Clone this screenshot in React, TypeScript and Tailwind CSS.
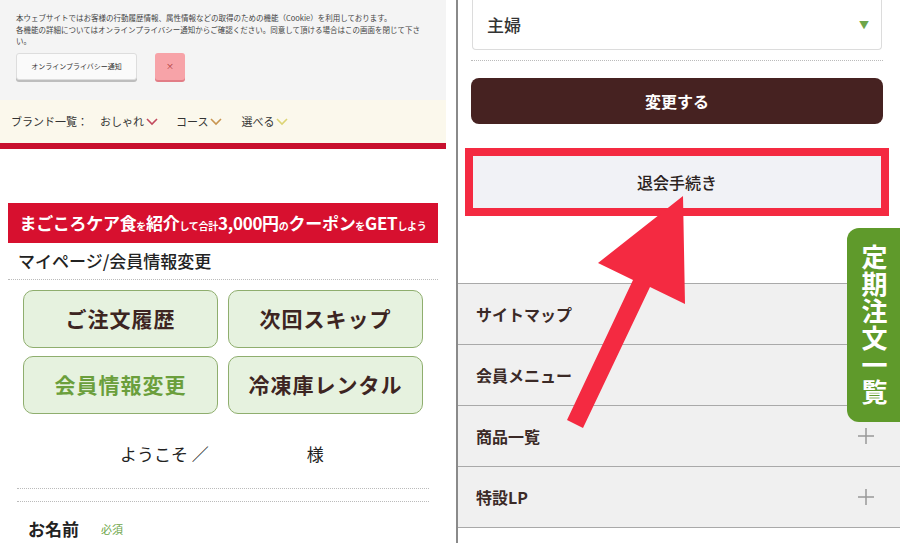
import React from "react";

const FONT = { fontFamily: '"Noto Sans CJK JP", "Noto Sans", sans-serif' };

function Chevron({ color }: { color: string }) {
  return (
    <svg width="12" height="8" viewBox="0 0 12 8" className="ml-[2px]">
      <polyline points="1,1 6,6 11,1" fill="none" stroke={color} strokeWidth="1.6" />
    </svg>
  );
}

function Plus() {
  return (
    <svg width="16" height="16" viewBox="0 0 16 16">
      <line x1="8" y1="0" x2="8" y2="16" stroke="#999" strokeWidth="1.5" />
      <line x1="0" y1="8" x2="16" y2="8" stroke="#999" strokeWidth="1.5" />
    </svg>
  );
}

export default function App() {
  const menuBtn =
    "flex items-center justify-center h-[58px] rounded-[10px] border border-[#8fae6e] bg-[#e6f2df] text-[21px] font-bold tracking-[1px]";
  return (
    <div style={FONT} className="w-[900px] h-[543px] overflow-hidden flex bg-white text-[#222]">
      {/* Left panel */}
      <div className="w-[446px] shrink-0 flex flex-col">
        {/* cookie */}
        <div className="h-[100px] shrink-0 bg-[#f4f4f4] pt-[12px] pl-[16px]">
          <div className="text-[7.5px] leading-[11.5px] text-[#444] whitespace-nowrap">
            <div>本ウェブサイトではお客様の行動履歴情報、属性情報などの取得のための機能（Cookie）を利用しております。</div>
            <div>各機能の詳細についてはオンラインプライバシー通知からご確認ください。同意して頂ける場合はこの画面を閉じて下さ</div>
            <div>い。</div>
          </div>
          <div className="flex gap-[18px] mt-[6px]">
            <div className="w-[121px] h-[27px] rounded-[3px] bg-[#fafafa] border border-[#ddd] shadow-[0_2px_0_#bdbdbd] flex items-center justify-center text-[7px] text-[#333]">
              オンラインプライバシー通知
            </div>
            <div className="w-[30px] h-[27px] rounded-[3px] bg-[#f7a3a8] shadow-[0_2px_0_#e27d86] flex items-center justify-center text-[8px] text-[#a33]">
              ×
            </div>
          </div>
        </div>
        {/* brand bar */}
        <div className="h-[43px] shrink-0 bg-[#fbf8ec] flex items-center pl-[11px] text-[11px] text-[#333]">
          <span>ブランド一覧：</span>
          <span className="ml-[12px] flex items-center">おしゃれ<Chevron color="#c24a5e" /></span>
          <span className="ml-[18px] flex items-center">コース<Chevron color="#c89550" /></span>
          <span className="ml-[19px] flex items-center">選べる<Chevron color="#dcd474" /></span>
        </div>
        <div className="h-[6px] shrink-0 bg-[#c8102e]" />
        {/* content */}
        <div className="shrink-0 pt-[54px] px-[8px]">
          <div className="h-[40px] bg-[#d7102f] flex items-center justify-center text-white font-bold whitespace-nowrap tracking-[-0.3px]">
            <span className="text-[17px]">まごころケア食</span>
            <span className="text-[10px] mt-[4px]">を</span>
            <span className="text-[17px]">紹介</span>
            <span className="text-[10px] mt-[4px]">して合計</span>
            <span className="text-[17px]">3,000円</span>
            <span className="text-[10px] mt-[4px]">の</span>
            <span className="text-[17px]">クーポン</span>
            <span className="text-[10px] mt-[4px]">を</span>
            <span className="text-[17px]">GET</span>
            <span className="text-[10px] mt-[4px]">しよう</span>
          </div>
          <div className="h-[36px] flex items-center pl-[10px] text-[17px] font-medium text-[#222]">
            マイページ/会員情報変更
          </div>
          <div className="border-t border-dotted border-[#bbb]" />
          <div className="grid grid-cols-2 gap-x-[10px] gap-y-[8px] px-[15px] mt-[10px]">
            <div className={menuBtn + " text-[#3d2522]"}>ご注文履歴</div>
            <div className={menuBtn + " text-[#3d2522]"}>次回スキップ</div>
            <div className={menuBtn + " text-[#6b9f3c]"}>会員情報変更</div>
            <div className={menuBtn + " text-[#3d2522]"}>冷凍庫レンタル</div>
          </div>
          <div className="h-[74px] pt-[6px] flex items-center text-[17px] text-[#222]">
            <span className="ml-[112px]">ようこそ ／</span>
            <span className="ml-[98px]">様</span>
          </div>
          <div className="mx-[9px] border-t border-dotted border-[#bbb]" />
          <div className="mx-[9px] mt-[12px] border-t border-dotted border-[#bbb]" />
          <div className="flex items-center h-[54px] pl-[20px]">
            <span className="text-[17px] font-bold text-[#222]">お名前</span>
            <span className="ml-[22px] text-[11px] text-[#6ea64a]">必須</span>
          </div>
        </div>
      </div>
      {/* separator */}
      <div className="w-[10px] shrink-0" />
      <div className="w-[2px] shrink-0 bg-[#8a8a8a]" />
      {/* Right panel */}
      <div className="relative flex-1 flex flex-col">
        <div className="shrink-0 ml-[14px] w-[410px] h-[50px] border border-t-0 border-[#dcdcdc] rounded-b-[4px] flex items-center justify-between pl-[14px] pr-[12px]">
          <span className="text-[17px] font-medium text-[#333]">主婦</span>
          <span className="text-[10px] text-[#6ea64a]">▼</span>
        </div>
        <div className="shrink-0 ml-[13px] w-[412px] mt-[10px] border-t border-dotted border-[#bbb]" />
        <div className="shrink-0 ml-[13px] w-[412px] h-[46px] mt-[17px] rounded-[8px] bg-[#462221] flex items-center justify-center text-white text-[16px] font-bold">
          変更する
        </div>
        <div className="shrink-0 ml-[7px] w-[424px] h-[68px] mt-[24px] border-[8px] border-[#f42a41] bg-[#f1f2f6] flex items-center justify-center text-[16px] font-medium text-[#2b2220]">
          退会手続き
        </div>
        <div className="shrink-0 mt-[67px] flex flex-col bg-[#f0f0f0] border-t border-[#a9a9a9]">
          {["サイトマップ", "会員メニュー", "商品一覧", "特設LP"].map((t) => (
            <div key={t} className="h-[61px] flex items-center justify-between pl-[18px] pr-[26px] border-b border-[#a9a9a9] text-[16px] font-bold text-[#3b2a27]">
              <span>{t}</span>
              <Plus />
            </div>
          ))}
        </div>
        {/* arrow overlay */}
        <svg className="absolute left-0 top-0" width="442" height="543" viewBox="458 0 442 543">
          <polygon
            points="567,420 633,280 598,263 683,196 685,304 650,287 583,428"
            fill="#f42a41"
          />
        </svg>
        {/* green tab */}
        <div className="absolute left-[389px] top-[228px] w-[60px] h-[194px] bg-[#5f9a2b] rounded-l-[12px] flex items-center justify-center pr-[6px]">
          <span className="[writing-mode:vertical-rl] [text-orientation:upright] text-white text-[26px] font-bold tracking-[1px] leading-[30px]">
            定期注文一覧
          </span>
        </div>
      </div>
    </div>
  );
}
